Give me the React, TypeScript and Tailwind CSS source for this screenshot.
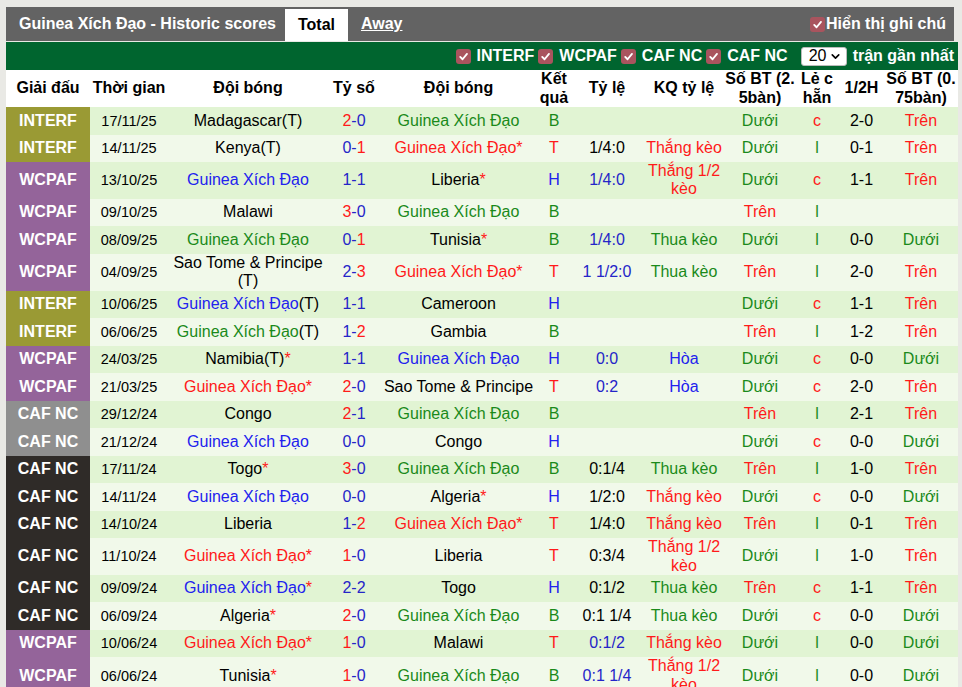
import { ChevronDown } from "lucide-react"

type Res = "B" | "T" | "H"

interface Match {
  lg: "I" | "W" | "C" | "D"
  date: string
  home: string
  score: string
  away: string
  res: Res
  odds?: string
  oddsBlue?: boolean
  kq?: string
  ou: string
  oe: string
  ht: string
  ou2: string
}

// "@" marks Guinea Xích Đạo, coloured by the result
const matches: Match[] = [
  { lg: "I", date: "17/11/25", home: "Madagascar(T)", score: "2-0", away: "@", res: "B", ou: "Dưới", oe: "c", ht: "2-0", ou2: "Trên" },
  { lg: "I", date: "14/11/25", home: "Kenya(T)", score: "0-1", away: "@*", res: "T", odds: "1/4:0", kq: "Thắng kèo", ou: "Dưới", oe: "l", ht: "0-1", ou2: "Trên" },
  { lg: "W", date: "13/10/25", home: "@", score: "1-1", away: "Liberia*", res: "H", odds: "1/4:0", oddsBlue: true, kq: "Thắng 1/2 kèo", ou: "Dưới", oe: "c", ht: "1-1", ou2: "Trên" },
  { lg: "W", date: "09/10/25", home: "Malawi", score: "3-0", away: "@", res: "B", ou: "Trên", oe: "l", ht: "", ou2: "" },
  { lg: "W", date: "08/09/25", home: "@", score: "0-1", away: "Tunisia*", res: "B", odds: "1/4:0", oddsBlue: true, kq: "Thua kèo", ou: "Dưới", oe: "l", ht: "0-0", ou2: "Dưới" },
  { lg: "W", date: "04/09/25", home: "Sao Tome & Principe (T)", score: "2-3", away: "@*", res: "T", odds: "1 1/2:0", oddsBlue: true, kq: "Thua kèo", ou: "Trên", oe: "l", ht: "2-0", ou2: "Trên" },
  { lg: "I", date: "10/06/25", home: "@(T)", score: "1-1", away: "Cameroon", res: "H", ou: "Dưới", oe: "c", ht: "1-1", ou2: "Trên" },
  { lg: "I", date: "06/06/25", home: "@(T)", score: "1-2", away: "Gambia", res: "B", ou: "Trên", oe: "l", ht: "1-2", ou2: "Trên" },
  { lg: "W", date: "24/03/25", home: "Namibia(T)*", score: "1-1", away: "@", res: "H", odds: "0:0", oddsBlue: true, kq: "Hòa", ou: "Dưới", oe: "c", ht: "0-0", ou2: "Dưới" },
  { lg: "W", date: "21/03/25", home: "@*", score: "2-0", away: "Sao Tome & Principe", res: "T", odds: "0:2", oddsBlue: true, kq: "Hòa", ou: "Dưới", oe: "c", ht: "2-0", ou2: "Trên" },
  { lg: "C", date: "29/12/24", home: "Congo", score: "2-1", away: "@", res: "B", ou: "Trên", oe: "l", ht: "2-1", ou2: "Trên" },
  { lg: "C", date: "21/12/24", home: "@", score: "0-0", away: "Congo", res: "H", ou: "Dưới", oe: "c", ht: "0-0", ou2: "Dưới" },
  { lg: "D", date: "17/11/24", home: "Togo*", score: "3-0", away: "@", res: "B", odds: "0:1/4", kq: "Thua kèo", ou: "Trên", oe: "l", ht: "1-0", ou2: "Trên" },
  { lg: "D", date: "14/11/24", home: "@", score: "0-0", away: "Algeria*", res: "H", odds: "1/2:0", kq: "Thắng kèo", ou: "Dưới", oe: "c", ht: "0-0", ou2: "Dưới" },
  { lg: "D", date: "14/10/24", home: "Liberia", score: "1-2", away: "@*", res: "T", odds: "1/4:0", kq: "Thắng kèo", ou: "Trên", oe: "l", ht: "0-1", ou2: "Trên" },
  { lg: "D", date: "11/10/24", home: "@*", score: "1-0", away: "Liberia", res: "T", odds: "0:3/4", kq: "Thắng 1/2 kèo", ou: "Dưới", oe: "l", ht: "1-0", ou2: "Trên" },
  { lg: "D", date: "09/09/24", home: "@*", score: "2-2", away: "Togo", res: "H", odds: "0:1/2", kq: "Thua kèo", ou: "Trên", oe: "c", ht: "1-1", ou2: "Trên" },
  { lg: "D", date: "06/09/24", home: "Algeria*", score: "2-0", away: "@", res: "B", odds: "0:1 1/4", kq: "Thua kèo", ou: "Dưới", oe: "c", ht: "0-0", ou2: "Dưới" },
  { lg: "W", date: "10/06/24", home: "@*", score: "1-0", away: "Malawi", res: "T", odds: "0:1/2", oddsBlue: true, kq: "Thắng kèo", ou: "Dưới", oe: "l", ht: "0-0", ou2: "Dưới" },
  { lg: "W", date: "06/06/24", home: "Tunisia*", score: "1-0", away: "@", res: "B", odds: "0:1 1/4", oddsBlue: true, kq: "Thắng 1/2 kèo", ou: "Dưới", oe: "l", ht: "0-0", ou2: "Dưới" },
]

const leagues = {
  I: { name: "INTERF", bg: "bg-[#9a9a34]" },
  W: { name: "WCPAF", bg: "bg-[#94649a]" },
  C: { name: "CAF NC", bg: "bg-[#8f8f8f]" },
  D: { name: "CAF NC", bg: "bg-[#2f2b28]" },
}

const resColor: Record<Res, string> = {
  B: "text-[#1a8a1a]",
  T: "text-[#ff1a1a]",
  H: "text-[#2222ee]",
}

const cols =
  "grid grid-cols-[84px_78px_160px_52px_157px_34px_72px_82px_70px_44px_45px_74px]"

function Check() {
  return (
    <span className="inline-flex h-[15px] w-[15px] shrink-0 items-center justify-center rounded-[3px] bg-[#a9545e]">
      <svg viewBox="0 0 12 12" className="h-[11px] w-[11px]">
        <path
          d="M2.4 6.4 L5 9 L9.8 3.2"
          fill="none"
          stroke="white"
          strokeWidth="2"
          strokeLinecap="round"
          strokeLinejoin="round"
        />
      </svg>
    </span>
  )
}

function Team({ t, res }: { t: string; res: Res }) {
  if (t.startsWith("@")) {
    const rest = t.slice(1)
    return (
      <span>
        <span className={resColor[res]}>Guinea Xích Đạo</span>
        {rest === "*" && <span className="text-[#ff1a1a]">*</span>}
        {rest === "(T)" && <span className="text-black">(T)</span>}
      </span>
    )
  }
  const star = t.endsWith("*")
  return (
    <span className="text-black">
      {star ? t.slice(0, -1) : t}
      {star && <span className="text-[#ff1a1a]">*</span>}
    </span>
  )
}

function Score({ s }: { s: string }) {
  const [a, b] = s.split("-")
  const blue = "text-[#2525c8]"
  const red = "text-[#ff1a1a]"
  if (+a > +b)
    return (
      <span>
        <span className={red}>{a}</span>
        <span className={blue}>-{b}</span>
      </span>
    )
  if (+b > +a)
    return (
      <span>
        <span className={blue}>{a}-</span>
        <span className={red}>{b}</span>
      </span>
    )
  return <span className={blue}>{s}</span>
}

function kqColor(k: string) {
  if (k.startsWith("Thắng")) return "text-[#ff1a1a]"
  if (k.startsWith("Thua")) return "text-[#1a8a1a]"
  return "text-[#2222ee]"
}

export default function App() {
  const cell = "flex items-center justify-center text-center"
  return (
    <div className="min-h-screen bg-[#e9e9e5] pl-[6px] pt-[7px] font-['Liberation_Sans',Arial,sans-serif] text-[16px] leading-[18.4px]">
      <div className="w-[952px]">
        {/* title bar */}
        <div className="mr-[4px] flex h-[34px] items-stretch bg-[#636363] pl-[13px] pr-[8px] font-bold text-white">
          <span className="self-center">Guinea Xích Đạo - Historic scores</span>
          <span className="ml-[9px] flex h-[32px] w-[63px] items-center justify-center self-end bg-white text-black">
            Total
          </span>
          <span className="ml-[13px] self-center underline">Away</span>
          <div className="ml-auto flex items-center self-center">
            <Check />
            <span className="ml-[1px]">Hiển thị ghi chú</span>
          </div>
        </div>

        {/* filter bar */}
        <div className="mt-[1px] flex h-[28px] items-center justify-end bg-[#00652f] pr-[4px] font-bold text-white">
          <Check />
          <span className="ml-[6px]">INTERF</span>
          <span className="ml-[4px]" />
          <Check />
          <span className="ml-[6px]">WCPAF</span>
          <span className="ml-[4px]" />
          <Check />
          <span className="ml-[6px]">CAF NC</span>
          <span className="ml-[4px]" />
          <Check />
          <span className="ml-[6px]">CAF NC</span>
          <span className="ml-[13px] flex h-[19px] w-[46px] items-center justify-between rounded-[3px] border border-[#bbb] bg-white pl-[7px] pr-[4px] font-normal text-black">
            20
            <ChevronDown className="h-[13px] w-[13px]" strokeWidth={3} />
          </span>
          <span className="ml-[6px]">trận gần nhất</span>
        </div>

        {/* header */}
        <div className={`${cols} h-[37px] bg-white font-bold text-black`}>
          <div className={cell}>Giải đấu</div>
          <div className={cell}>Thời gian</div>
          <div className={cell}>Đội bóng</div>
          <div className={cell}>Tỷ số</div>
          <div className={cell}>Đội bóng</div>
          <div className={cell}>
            Kết
            <br />
            quả
          </div>
          <div className={cell}>Tỷ lệ</div>
          <div className={cell}>KQ tỷ lệ</div>
          <div className={`${cell} whitespace-nowrap`}>
            Số BT (2.
            <br />
            5bàn)
          </div>
          <div className={`${cell} whitespace-nowrap`}>
            Lẻ c
            <br />
            hẵn
          </div>
          <div className={cell}>1/2H</div>
          <div className={`${cell} whitespace-nowrap`}>
            Số BT (0.
            <br />
            75bàn)
          </div>
        </div>

        {/* rows */}
        {matches.map((m, i) => (
          <div
            key={i}
            className={`${cols} min-h-[27.5px] ${i % 2 === 0 ? "bg-[#e1f4d3]" : "bg-[#f1f9ea]"}`}
          >
            <div className={`${cell} ${leagues[m.lg].bg} font-bold text-white`}>
              {leagues[m.lg].name}
            </div>
            <div className={`${cell} text-[14.5px] text-black`}>{m.date}</div>
            <div className={cell}>
              <Team t={m.home} res={m.res} />
            </div>
            <div className={cell}>
              <Score s={m.score} />
            </div>
            <div className={cell}>
              <Team t={m.away} res={m.res} />
            </div>
            <div className={`${cell} ${resColor[m.res]}`}>{m.res}</div>
            <div className={`${cell} whitespace-nowrap ${m.oddsBlue ? "text-[#2525c8]" : "text-black"}`}>
              {m.odds}
            </div>
            <div className={`${cell} ${m.kq ? kqColor(m.kq) : ""}`}>
              {m.kq === "Thắng 1/2 kèo" ? (
                <span>
                  Thắng 1/2
                  <br />
                  kèo
                </span>
              ) : (
                m.kq
              )}
            </div>
            <div className={`${cell} ${m.ou === "Trên" ? "text-[#ff1a1a]" : "text-[#1a8a1a]"}`}>{m.ou}</div>
            <div className={`${cell} ${m.oe === "c" ? "text-[#ff1a1a]" : "text-[#1a8a1a]"}`}>{m.oe}</div>
            <div className={`${cell} text-black`}>{m.ht}</div>
            <div className={`${cell} ${m.ou2 === "Trên" ? "text-[#ff1a1a]" : "text-[#1a8a1a]"}`}>{m.ou2}</div>
          </div>
        ))}
      </div>
    </div>
  )
}
